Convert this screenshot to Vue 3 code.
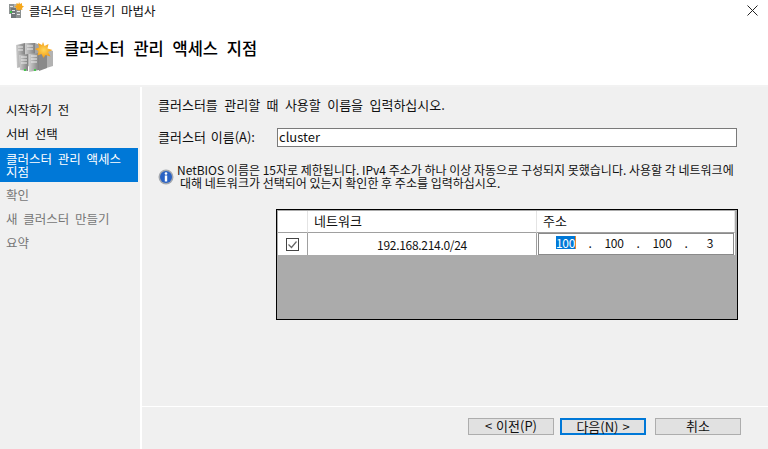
<template>
  <div class="wizard">
    <div class="titlebar">
      <svg class="title-icon" width="16" height="16" viewBox="0 0 16 16">
        <rect x="1" y="2" width="5" height="10" fill="#8f9494" />
        <rect x="6" y="2" width="5" height="10" fill="#b2b4b4" />
        <rect x="3" y="6" width="5" height="10" fill="#71777a" />
        <rect x="8" y="7" width="5" height="9" fill="#8b9090" />
        <rect x="2" y="4" width="3" height="1" fill="#e8e8e8" />
        <rect x="4" y="8" width="3" height="1" fill="#e8e8e8" />
        <rect x="4" y="11" width="3" height="1" fill="#e8e8e8" />
        <rect x="9" y="9" width="3" height="1" fill="#e8e8e8" />
        <rect x="9" y="12" width="3" height="1" fill="#e8e8e8" />
        <rect x="2" y="9" width="2" height="2" fill="#3fc14a" />
        <path d="M11 0l1 2 2-1 0 2.500 2 1-2 1.500 .5 2-2.500-.5-1 1.500-1-1.500-2 .5 .5-2-2-1.500 2-1 0-2.500 2 1z" fill="#f6a81c" />
      </svg>
      <span class="title-text">클러스터 만들기 마법사</span>
      <svg class="close" width="11" height="11" viewBox="0 0 11 11">
        <path d="M.5.500l10 10M10.500.500l-10 10" stroke="#222" fill="none" />
      </svg>
    </div>

    <header class="head">
      <svg class="head-icon" width="37" height="30" viewBox="0 0 37 30">
        <defs>
          <linearGradient id="srv" x1="0" y1="0" x2="1" y2="0">
            <stop offset="0" stop-color="#d0d0d0" />
            <stop offset="1" stop-color="#808080" />
          </linearGradient>
          <radialGradient id="star">
            <stop offset="0" stop-color="#ffd75a" />
            <stop offset="1" stop-color="#f39a12" />
          </radialGradient>
        </defs>
        <path d="M0 3l9-2v23l-8 2z" fill="url(#srv)" />
        <path d="M9 1l10 0v22l-10 2z" fill="url(#srv)" />
        <path d="M19 1l8 3v20l-8 2z" fill="#a4a4a4" />
        <path d="M27 6l10 3v15l-10 3z" fill="#b2b2b2" />
        <path d="M3 13l9-1v17l-8-1z" fill="url(#srv)" />
        <path d="M13 12l10-1v17l-10 2z" fill="url(#srv)" />
        <path d="M23 11l8 2v13l-8 3z" fill="#8a8a8a" />
        <path d="M2 5h5M2 8h5M11 4h6M11 7h6M5 15h6M5 18h6M5 21h6M15 14h6M15 17h6M15 20h6" stroke="#ededed" fill="none" />
        <rect x="8" y="27" width="2" height="2" fill="#45c84e" />
        <rect x="18" y="27" width="2" height="2" fill="#45c84e" />
        <path d="M27 0l1.500 4 4-2-1 4.500 5 1.500-4.500 2 2.500 4.500-5-1.500-2 3-2-4-4 1.500 1-4.500-3.500-2 4-1.500-1-4.500 4 2z" fill="url(#star)" />
      </svg>
      <h1>클러스터 관리 액세스 지점</h1>
    </header>

    <div class="body">
      <nav class="side">
        <div class="step">시작하기 전</div>
        <div class="step">서버 선택</div>
        <div class="step active">클러스터 관리 액세스<br />지점</div>
        <div class="step off">확인</div>
        <div class="step off">새 클러스터 만들기</div>
        <div class="step off">요약</div>
      </nav>

      <main class="panel">
        <div class="content">
          <p class="intro">클러스터를 관리할 때 사용할 이름을 입력하십시오.</p>
          <div class="name-row">
            <label for="cname">클러스터 이름(A):</label>
            <input id="cname" type="text" value="cluster" />
          </div>
          <div class="notice">
            <svg width="16" height="16" viewBox="0 0 16 16">
              <circle cx="8" cy="8" r="7.500" fill="#a4a8ae" />
              <circle cx="8" cy="8" r="6" fill="#2a62c4" />
              <circle cx="8" cy="4.500" r="1.300" fill="#fff" />
              <rect x="6.800" y="6.500" width="2.400" height="6" fill="#fff" />
            </svg>
            <p>
              <span>NetBIOS 이름은 15자로 제한됩니다. IPv4 주소가 하나 이상 자동으로 구성되지 못했습니다. 사용할 각 네트워크에</span>
              <span class="second">대해 네트워크가 선택되어 있는지 확인한 후 주소를 입력하십시오.</span>
            </p>
          </div>

          <div class="grid">
            <div class="cell hd"></div>
            <div class="cell hd">네트워크</div>
            <div class="cell hd">주소</div>
            <div class="cell check">
              <svg width="13" height="13" viewBox="0 0 13 13">
                <rect x=".5" y=".5" width="12" height="12" fill="#fff" stroke="#444" />
                <path d="M2.500 6.500l3 3 5-6" fill="none" stroke="#666" stroke-width="1.200" />
              </svg>
            </div>
            <div class="cell net">192.168.214.0/24</div>
            <div class="cell addr">
              <div class="ip">
                <span class="oct"><span class="sel">100</span></span><span class="dot">.</span>
                <span class="oct">100</span><span class="dot">.</span>
                <span class="oct">100</span><span class="dot">.</span>
                <span class="oct">3</span>
              </div>
            </div>
          </div>
        </div>

        <footer class="foot">
          <button>&lt; 이전(P)</button>
          <button class="primary">다음(N) &gt;</button>
          <button class="cancel">취소</button>
        </footer>
      </main>
    </div>
  </div>
</template>

<script setup>
</script>

<style>
html, body {
  margin: 0;
  height: 100%;
  overflow: hidden;
}
</style>

<style scoped>
.wizard {
  width: 768px;
  height: 449px;
  display: flex;
  flex-direction: column;
  background: #fff;
  font-family: "Noto Sans CJK KR", "Noto Sans", sans-serif;
  font-size: 13px;
  color: #111;
}

.titlebar {
  height: 20px;
  display: flex;
  align-items: center;
  padding-left: 8px;
  flex: none;
}

.title-text {
  margin-left: 5px;
  font-size: 12.500px;
  word-spacing: 3px;
}

.close {
  margin-left: auto;
  margin-right: 10px;
}

.head {
  height: 65px;
  display: flex;
  align-items: flex-start;
  padding-left: 16px;
  box-sizing: border-box;
  flex: none;
}

.head-icon {
  margin-top: 22px;
}

.head h1 {
  margin: 16px 0 0 11px;
  font-size: 16.500px;
  line-height: 24px;
  font-weight: 500;
  word-spacing: 5px;
  color: #000;
}

.body {
  flex: 1;
  display: flex;
  border-top: 2px solid #f2f2f2;
  background: #f0f0f0;
  min-height: 0;
}

.side {
  width: 140px;
  padding-top: 11px;
  border-right: 2px solid #fff;
  flex: none;
  font-size: 12.500px;
  word-spacing: 3px;
}

.step {
  height: 24px;
  line-height: 23px;
  padding-left: 6px;
  margin-right: 2px;
}

.step.active {
  height: 34px;
  line-height: 13px;
  padding-top: 4px;
  margin: 2px 2px 1px 0;
  box-sizing: border-box;
  background: #0078d7;
  color: #fff;
}

.step.off {
  color: #777;
}

.panel {
  flex: 1;
  display: flex;
  flex-direction: column;
}

.content {
  flex: 1;
  padding: 9px 31px 0 16px;
}

.intro {
  margin: 0;
  line-height: 18px;
  word-spacing: 3.500px;
}

.name-row {
  display: flex;
  align-items: center;
  margin-top: 14px;
}

.name-row label {
  width: 119px;
  word-spacing: 2px;
  margin-top: -3px;
}

.name-row input {
  width: 460px;
  height: 19px;
  box-sizing: border-box;
  padding: 0 2px 2px 1px;
  border: 1px solid #7a7a7a;
  font: inherit;
  color: #111;
  outline: none;
  background: #fff;
}

.notice {
  display: flex;
  align-items: center;
  margin-top: 17px;
}

.notice svg {
  flex: none;
}

.notice p {
  margin: -1px 0 1px 3px;
  font-size: 12px;
  line-height: 13px;
}

.notice span {
  display: block;
}

.notice .second {
  margin-left: 3px;
}

.grid {
  width: 462px;
  height: 111px;
  margin: 19px 0 0 118px;
  box-sizing: border-box;
  border: 1px solid #000;
  background: #ababab;
  padding: 1px 2px 0 1px;
  display: grid;
  grid-template-columns: 30px 229px 1fr;
  grid-template-rows: 22px 22px;
}

.cell {
  background: #fff;
  box-sizing: border-box;
}

.hd {
  border-right: 1px solid #e4e4e4;
  border-bottom: 1px solid #a0a0a0;
  padding-left: 6px;
  line-height: 19px;
  font-size: 13px;
}

.check,
.net {
  display: flex;
  align-items: center;
  justify-content: center;
  border-right: 1px solid #a0a0a0;
  font-size: 12px;
  letter-spacing: -0.3px;
}

.addr {
  padding: 0 1px;
  font-size: 12px;
}

.ip {
  height: 22px;
  box-sizing: border-box;
  border: 1px solid #8a8a8a;
  display: flex;
  align-items: center;
  padding: 0 0 4px 11px;
  letter-spacing: -0.3px;
}

.oct {
  width: 32px;
  text-align: center;
}

.dot {
  width: 16px;
  text-align: center;
}

.sel {
  display: inline-block;
  height: 13px;
  line-height: 13px;
  background: #0078d7;
  color: #fff;
  border-right: 1px solid #e8862a;
}

.foot {
  height: 43px;
  flex: none;
  box-sizing: border-box;
  border-top: 1px solid #fff;
  display: flex;
  gap: 6px;
  padding: 11px 0 0 326px;
}

.foot button {
  width: 86px;
  height: 17px;
  padding: 0 0 2px;
  box-sizing: border-box;
  border: 1px solid #adadad;
  background: #e1e1e1;
  font: inherit;
  line-height: 13px;
  word-spacing: 1px;
  color: #111;
}

.foot .primary {
  border: 2px solid #0078d7;
}

.foot .cancel {
  margin-left: 3px;
}
</style>
